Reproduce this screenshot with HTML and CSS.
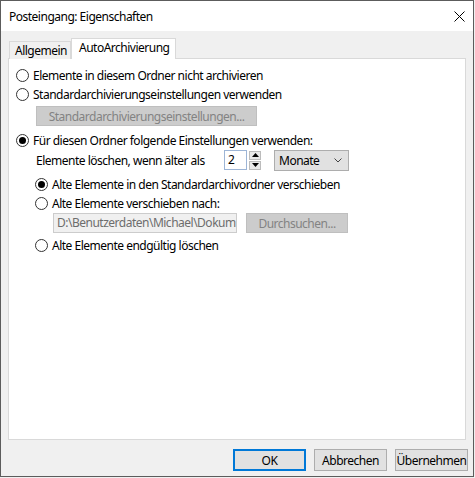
FILE: index.html
```html
<!DOCTYPE html>
<html lang="de">
<head>
<meta charset="utf-8">
<title>Posteingang: Eigenschaften</title>
<link rel="stylesheet" href="styles.css">
</head>
<body>
<div class="window">
  <div class="titlebar">
    <span class="title">Posteingang: Eigenschaften</span>
    <svg class="close" width="11" height="11" viewBox="0 0 11 11"><path d="M0.5 0.5 L10.5 10.5 M10.5 0.5 L0.5 10.5" stroke="#000" stroke-width="1" fill="none"/></svg>
  </div>
  <div class="client">
    <div class="tabs">
      <div class="tab">Allgemein</div>
      <div class="tab active">AutoArchivierung</div>
    </div>
    <div class="panel">
      <div class="radio-row"><span class="radio"></span><span>Elemente in diesem Ordner nicht archivieren</span></div>
      <div class="radio-row"><span class="radio"></span><span>Standardarchivierungseinstellungen verwenden</span></div>
      <div class="btn disabled wide">Standardarchivierungseinstellungen...</div>
      <div class="radio-row r3"><span class="radio checked"></span><span>Für diesen Ordner folgende Einstellungen verwenden:</span></div>
      <div class="ctrl-row">
        <span class="ctrl-label">Elemente löschen, wenn älter als</span>
        <span class="spin-input">2</span>
        <span class="spin-btns">
          <span class="spin-btn"><svg width="7" height="4" viewBox="0 0 7 4"><path d="M3.5 0 L7 4 L0 4 Z" fill="#000"/></svg></span>
          <span class="spin-btn"><svg width="7" height="4" viewBox="0 0 7 4"><path d="M0 0 L7 0 L3.5 4 Z" fill="#000"/></svg></span>
        </span>
        <span class="combo">Monate<svg class="chev" width="8" height="5" viewBox="0 0 8 5"><path d="M0.5 0.5 L4 4 L7.5 0.5" stroke="#444" stroke-width="1" fill="none"/></svg></span>
      </div>
      <div class="radio-row sub r4"><span class="radio checked"></span><span>Alte Elemente in den Standardarchivordner verschieben</span></div>
      <div class="radio-row sub"><span class="radio"></span><span>Alte Elemente verschieben nach:</span></div>
      <div class="path-row">
        <span class="textbox">D:\Benutzerdaten\Michael\Dokum</span>
        <span class="btn disabled browse">Durchsuchen...</span>
      </div>
      <div class="radio-row sub r6"><span class="radio"></span><span>Alte Elemente endgültig löschen</span></div>
    </div>
    <div class="footer">
      <span class="btn default">OK</span>
      <span class="btn">Abbrechen</span>
      <span class="btn">Übernehmen</span>
    </div>
  </div>
</div>
</body>
</html>
```

FILE: styles.css
```css
* { box-sizing: border-box; }
html, body { margin: 0; padding: 0; }
body {
  width: 475px; height: 478px; overflow: hidden;
  background: #f0f0f0;
  font-family: "Noto Sans", "Open Sans", sans-serif;
  font-size: 12px; letter-spacing: -0.5px; color: #000;
}
.window {
  width: 474px; height: 477px;
  border: 1px solid #5c5c5c;
  display: flex; flex-direction: column;
  background: #f0f0f0;
}
.titlebar {
  height: 30px; flex: none; background: #fff;
  display: flex; align-items: center; justify-content: space-between;
  padding: 0 8px 0 8px;
}
.client {
  flex: 1; display: flex; flex-direction: column;
  padding: 7px 7px 0 7px;
}
.tabs {
  display: flex; align-items: flex-end; height: 21px;
  margin-left: 1px; margin-bottom: -1px; position: relative; z-index: 1;
}
.tab {
  height: 18px; width: 62px; padding-left: 5px;
  border: 1px solid #d9d9d9; border-bottom: none; background: #f0f0f0;
  line-height: 17px; white-space: nowrap;
}
.tab.active {
  height: 21px; width: 105px; padding-left: 7px; background: #fff;
  line-height: 18px;
}
.panel {
  height: 382px; flex: none; background: #fff;
  border: 1px solid #d9d9d9;
  padding: 7px 0 0 7px;
  display: flex; flex-direction: column; align-items: flex-start;
}
.radio-row { height: 19px; display: flex; align-items: center; gap: 4px; white-space: nowrap; }
.radio {
  width: 13px; height: 13px; border: 1px solid #333; border-radius: 50%;
  background: #fff; display: inline-flex; align-items: center; justify-content: center; flex: none;
}
.radio.checked::after { content: ""; width: 7px; height: 7px; border-radius: 50%; background: #000; }
.sub { margin-left: 19px; }
.r3 { margin-top: 5px; }
.r4 { margin-top: 5px; }
.r6 { margin-top: 3px; }
.btn {
  display: inline-flex; align-items: center; justify-content: center;
  height: 22px; background: #e1e1e1; border: 1px solid #adadad; white-space: nowrap;
}
.btn.disabled { background: #cccccc; border-color: #bfbfbf; color: #838383; }
.btn.wide { width: 221px; height: 20px; margin: 2px 0 0 20px; }
.ctrl-row { height: 20px; display: flex; align-items: center; margin-left: 20px; }
.ctrl-label { width: 188px; white-space: nowrap; }
.spin-input {
  width: 23px; height: 20px; border: 1px solid #9db5d6; background: #fff;
  padding-left: 3px; line-height: 18px;
}
.spin-btns { display: flex; flex-direction: column; gap: 1px; margin-left: 2px; height: 19px; }
.spin-btn {
  width: 12px; height: 9px; border: 1px solid #bcbcbc; background: #e9e9e9;
  display: flex; align-items: center; justify-content: center;
}
.combo {
  margin-left: 13px; width: 75px; height: 21px;
  background: #e1e1e1; border: 1px solid #adadad;
  display: flex; align-items: center; justify-content: space-between; padding: 0 6px 0 4px;
}
.path-row { display: flex; align-items: center; margin-left: 37px; height: 20px; }
.textbox {
  width: 184px; height: 20px; background: #f0f0f0; border: 1px solid #cccccc;
  color: #6d6d6d; padding-left: 3px; line-height: 18px; white-space: nowrap; overflow: hidden;
}
.btn.browse { width: 102px; height: 20px; margin-left: 9px; }
.footer {
  display: flex; justify-content: flex-end; gap: 8px;
  padding: 9px 0 0 0; margin-right: -2px;
}
.footer .btn { width: 73px; }
.footer .btn.default { border: 2px solid #0078d7; }
```
